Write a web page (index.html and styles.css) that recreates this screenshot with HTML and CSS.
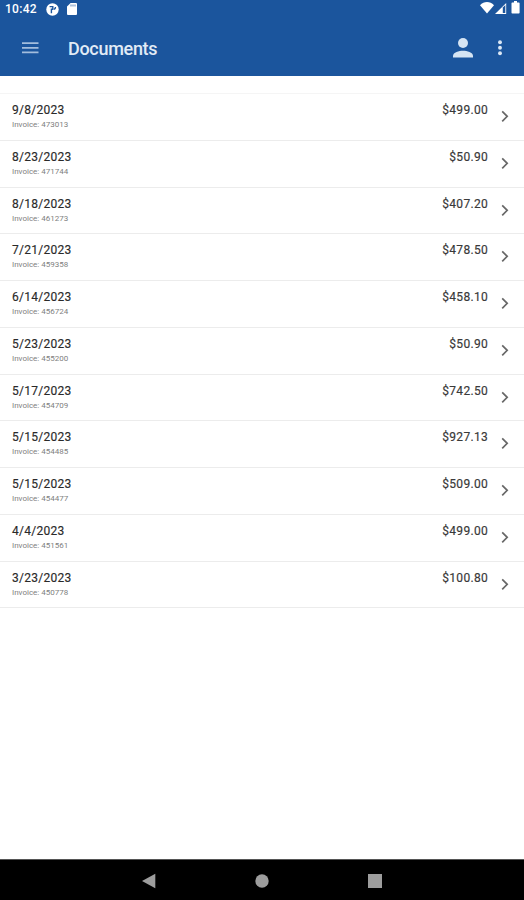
FILE: index.html
```html
<!DOCTYPE html>
<html lang="en">
<head>
<meta charset="utf-8">
<title>Documents</title>
<link rel="stylesheet" href="styles.css">
</head>
<body>
<header class="top">
  <div class="status">
    <span class="clock">10:42</span>
    <svg class="st-app" width="13" height="13" viewBox="0 0 13 13"><circle cx="6.5" cy="6.5" r="6.2" fill="#fff"/><path d="M3.6 3.6h3.2v2.6H5.4v4M8 6.4c1-.4 1.5-1.2 1.5-2.4" fill="none" stroke="#1b559d" stroke-width="1.4"/></svg>
    <svg class="st-sd" width="10" height="12" viewBox="0 0 10 12"><path d="M3.6 0H9a1 1 0 0 1 1 1v10a1 1 0 0 1-1 1H1a1 1 0 0 1-1-1V3.6z" fill="#fff"/><path d="M4 1.5v2M6 1.5v2M8 1.5v2" stroke="#1b559d" stroke-width=".7"/></svg>
    <span class="spacer"></span>
    <svg class="st-net" width="42" height="14" viewBox="0 0 42 14"><path d="M0 4.2C4-.1 10-.1 14 4.2L7 12.5z" fill="#fff"/><path d="M15 13 26.2 2v11z" fill="#fff"/><path d="M22.8 6.4 25.3 4v8h-2.5z" fill="#1b559d"/><path d="M34 0h3v1.4h1.8a.8.8 0 0 1 .8.8v9.6a.8.8 0 0 1-.8.8h-6.5a.8.8 0 0 1-.8-.8V2.2a.8.8 0 0 1 .8-.8H34z" fill="#fff"/></svg>
  </div>
  <div class="appbar">
    <svg width="17" height="12" viewBox="0 0 17 12"><path d="M0 1.2h16.5M0 5.8h16.5M0 10.4h16.5" stroke="#a3bddd" stroke-width="1.7"/></svg>
    <h1 class="title">Documents</h1>
    <svg class="person" width="20" height="20" viewBox="0 0 20 20" fill="#d5e4f3"><circle cx="10" cy="5" r="5"/><path d="M0 19.5v-1.7c0-3.4 6-5.1 10-5.1s10 1.7 10 5.1v1.7z"/></svg>
    <svg class="more" width="4" height="16" viewBox="0 0 4 16" fill="#dce8f5"><circle cx="2" cy="2.2" r="1.95"/><circle cx="2" cy="7.8" r="1.95"/><circle cx="2" cy="13.3" r="1.95"/></svg>
  </div>
</header>
<main class="list" id="list"></main>
<nav class="nav">
  <svg width="14" height="16" viewBox="0 0 14 16"><path d="M0 8 13.3.8v14.4z"/></svg>
  <svg width="14" height="14" viewBox="0 0 14 14"><circle cx="7" cy="7" r="6.7"/></svg>
  <svg width="14" height="14" viewBox="0 0 14 14"><path d="M0 0h14v14H0z"/></svg>
</nav>
<script src="app.js"></script>
</body>
</html>
```
FILE: styles.css
```css
* { box-sizing: border-box; }
body {
  margin: 0;
  height: 900px;
  display: flex;
  flex-direction: column;
  background: #fff;
  font-family: Roboto, "Liberation Sans", sans-serif;
  overflow: hidden;
}
svg { display: block; flex: none; }
.top { height: 76px; background: #1b559d; color: #e1ebf6; flex: none; }
.status { display: flex; align-items: center; height: 18px; padding: 0 3px 0 5px; }
.clock { width: 41px; font-size: 12px; font-weight: 500; letter-spacing: .3px; color: #fff; }
.st-sd { margin-left: 8px; }
.st-net { margin-right: -1px; margin-top: -2px; }
.spacer { flex: 1; }
.appbar { display: flex; align-items: center; height: 60px; padding: 0 22px; }
.title { margin: 0 auto 0 29px; padding-top: 1px; font-size: 18px; line-height: 24px; font-weight: 500; letter-spacing: -.3px; }
.person { margin-right: 25px; }
.more { margin-right: 0; }
.list { flex: 1; padding-top: 17px; }
.list::before { content: ""; display: block; height: 1px; background: #f5f5f5; }
.row {
  display: flex;
  height: 46.77px;
  padding: 8px 15px 0 12px;
  border-bottom: 1px solid #ececec;
}
.doc { flex: 1; }
.date, .amount { font-size: 12px; line-height: 16px; letter-spacing: .26px; color: #2a2a2a; -webkit-text-stroke: .15px #2a2a2a; }
.amount { letter-spacing: .3px; color: #3a3a3a; }
.invoice { font-size: 8px; line-height: 10px; padding-top: 2px; color: #808080; }
.chevron { margin: 8px 0 0 13px; }
.nav {
  height: 41px;
  flex: none;
  display: flex;
  align-items: center;
  justify-content: space-between;
  padding: 1px 142px 0;
  border-top: 1px solid #555;
  background: #000;
}
.nav svg { fill: #9d9d9d; }
```
FILE: app.js
```js
const documents = [
  ["9/8/2023", "473013", "$499.00"],
  ["8/23/2023", "471744", "$50.90"],
  ["8/18/2023", "461273", "$407.20"],
  ["7/21/2023", "459358", "$478.50"],
  ["6/14/2023", "456724", "$458.10"],
  ["5/23/2023", "455200", "$50.90"],
  ["5/17/2023", "454709", "$742.50"],
  ["5/15/2023", "454485", "$927.13"],
  ["5/15/2023", "454477", "$509.00"],
  ["4/4/2023", "451561", "$499.00"],
  ["3/23/2023", "450778", "$100.80"]
];
document.getElementById("list").innerHTML = documents.map(([date, invoice, amount]) => `
  <div class="row">
    <div class="doc"><div class="date">${date}</div><div class="invoice">Invoice: ${invoice}</div></div>
    <div class="amount">${amount}</div>
    <svg class="chevron" width="8" height="13" viewBox="0 0 8 13"><path d="M1.2 1.3 6.2 6.3 1.2 11.3" fill="none" stroke="#686868" stroke-width="1.7"/></svg>
  </div>`).join("");
```
